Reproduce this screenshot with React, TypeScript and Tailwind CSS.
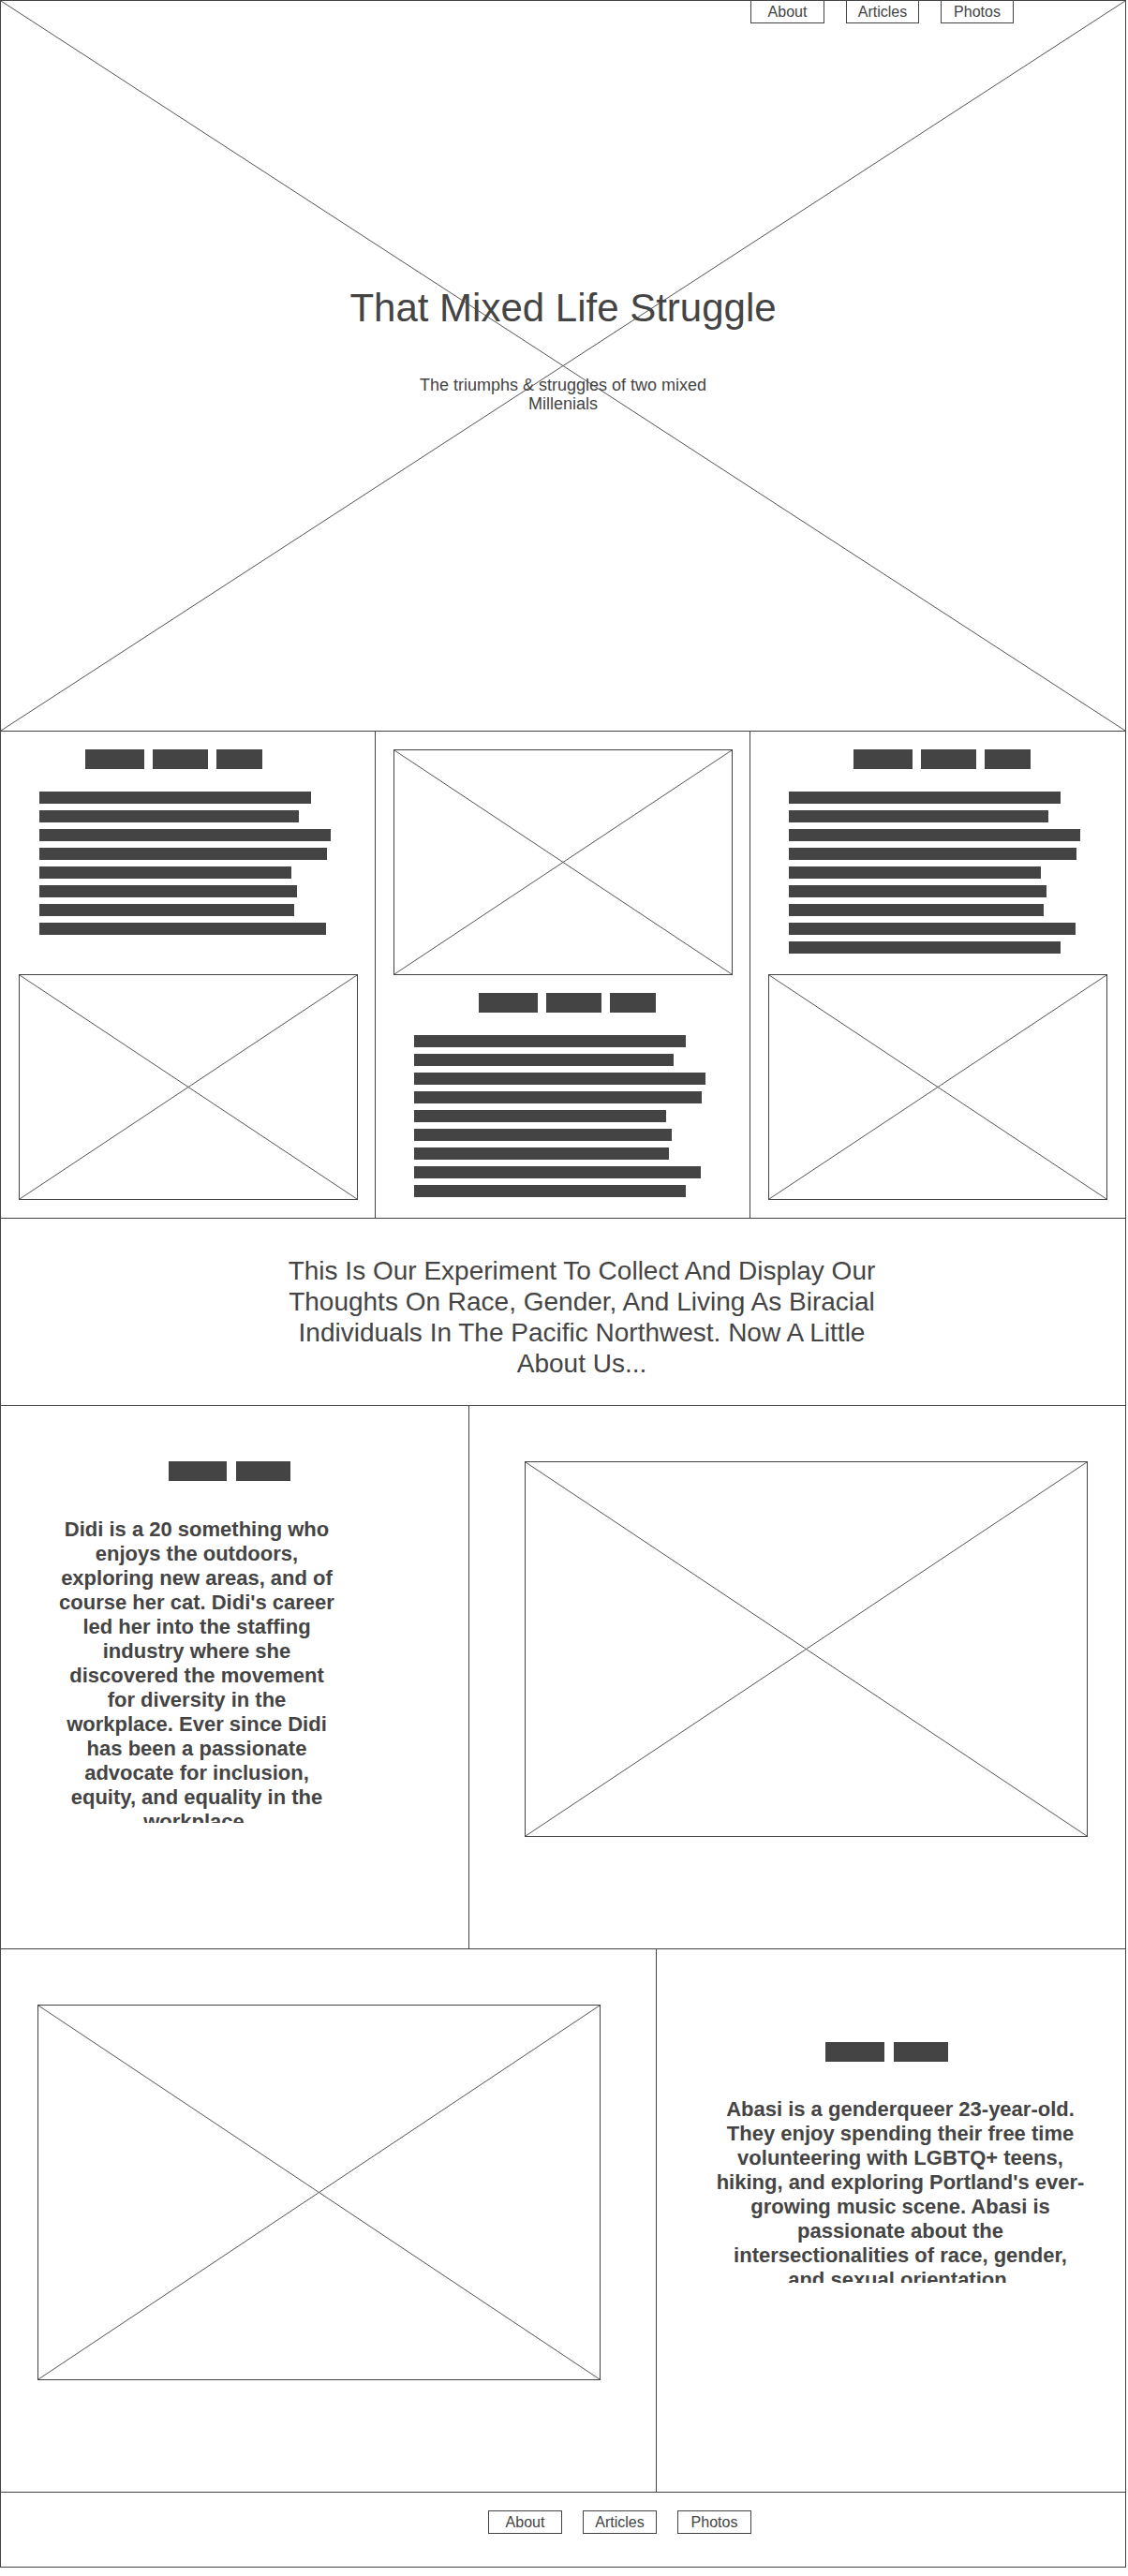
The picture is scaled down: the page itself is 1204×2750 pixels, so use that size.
import React from "react";

const barsShort = [290, 277, 311, 307, 269, 275, 272, 306];
const barsLong = [...barsShort, 290];

const didi =
  "Didi is a 20 something who enjoys the outdoors, exploring new areas, and of course her cat. Didi's career led her into the staffing industry where she discovered the movement for diversity in the workplace. Ever since Didi has been a passionate advocate for inclusion, equity, and equality in the workplace.";

const abasi =
  "Abasi is a genderqueer 23-year-old. They enjoy spending their free time volunteering with LGBTQ+ teens, hiking, and exploring Portland's ever-growing music scene. Abasi is passionate about the intersectionalities of race, gender, and sexual orientation.";

export default function App() {
  return (
    <div className="w-[1202px] border border-[#444] bg-white font-['Liberation_Sans',Arial,sans-serif] text-[#444]">
      {/* hero */}
      <header className="relative flex h-[780px] flex-col items-center border-b border-[#444]">
        <svg className="absolute inset-0 h-full w-full" preserveAspectRatio="none">
          <line x1="0" y1="0" x2="100%" y2="100%" stroke="#555" strokeWidth="1" />
          <line x1="100%" y1="0" x2="0" y2="100%" stroke="#555" strokeWidth="1" />
        </svg>
        <nav className="relative flex w-full gap-[23px] pl-[800px]">
          <NavButton label="About" width="w-[79px]" hero />
          <NavButton label="Articles" width="w-[78px]" hero />
          <NavButton label="Photos" width="w-[78px]" hero />
        </nav>
        <h1 className="relative mt-[280px] text-[42px] leading-[48px]">That Mixed Life Struggle</h1>
        <p className="relative mt-[48px] w-[330px] text-center text-[18px] leading-[20px]">
          The triumphs &amp; struggles of two mixed Millenials
        </p>
      </header>

      {/* article teasers */}
      <section className="flex h-[520px] border-b border-[#444]">
        <div className="flex w-[400px] flex-col border-r border-[#444] pt-[19px]">
          <Tags widths={[63, 59, 49]} className="ml-[90px] gap-[9px]" />
          <Bars widths={barsShort} className="ml-[41px] mt-[24px]" />
          <Cross className="ml-[19px] mt-[42px] h-[241px] w-[362px]" />
        </div>
        <div className="flex w-[400px] flex-col border-r border-[#444] pt-[19px]">
          <Cross className="ml-[19px] h-[241px] w-[362px]" />
          <Tags widths={[63, 59, 49]} className="ml-[110px] mt-[19px] gap-[9px]" />
          <Bars widths={barsLong} className="ml-[41px] mt-[24px]" />
        </div>
        <div className="flex flex-1 flex-col pt-[19px]">
          <Tags widths={[63, 59, 49]} className="ml-[110px] gap-[9px]" />
          <Bars widths={barsLong} className="ml-[41px] mt-[24px]" />
          <Cross className="ml-[19px] mt-[22px] h-[241px] w-[362px]" />
        </div>
      </section>

      {/* intro */}
      <section className="h-[200px] border-b border-[#444] pt-[39px]">
        <p className="ml-[300px] w-[640px] text-center text-[28px] leading-[33px]">
          This Is Our Experiment To Collect And Display Our Thoughts On Race, Gender, And Living As
          Biracial Individuals In The Pacific Northwest. Now A Little About Us...
        </p>
      </section>

      {/* didi */}
      <section className="flex h-[580px] border-b border-[#444]">
        <div className="flex w-[500px] flex-col border-r border-[#444] pt-[59px]">
          <Tags widths={[62, 58]} className="ml-[179px] gap-[10px]" />
          <Bio text={didi} className="ml-[59px] mt-[39px] h-[326px] w-[300px]" />
        </div>
        <div className="flex-1 pl-[59px] pt-[59px]">
          <Cross className="h-[401px] w-[601px]" />
        </div>
      </section>

      {/* abasi */}
      <section className="flex h-[580px] border-b border-[#444]">
        <div className="w-[700px] border-r border-[#444] pl-[39px] pt-[59px]">
          <Cross className="h-[401px] w-[601px]" />
        </div>
        <div className="flex flex-1 flex-col pt-[99px]">
          <Tags widths={[63, 58]} className="ml-[180px] gap-[10px]" />
          <Bio text={abasi} className="ml-[61px] mt-[38px] h-[198px] w-[398px]" />
        </div>
      </section>

      {/* footer */}
      <footer className="h-[79px] pt-[19px]">
        <nav className="flex gap-[22px] pl-[520px]">
          <NavButton label="About" width="w-[79px]" />
          <NavButton label="Articles" width="w-[79px]" />
          <NavButton label="Photos" width="w-[79px]" />
        </nav>
      </footer>
    </div>
  );
}

function NavButton({ label, width, hero }: { label: string; width: string; hero?: boolean }) {
  return (
    <a
      className={`flex items-center justify-center border-[#444] bg-white text-[16px] leading-none ${width} ${
        hero ? "h-[24px] border-x border-b" : "h-[25px] border"
      }`}
    >
      {label}
    </a>
  );
}

function Tags({ widths, className }: { widths: number[]; className: string }) {
  return (
    <div className={`relative flex ${className}`}>
      {widths.map((w, i) => (
        <div key={i} className="h-[21px] bg-[#444]" style={{ width: w }} />
      ))}
    </div>
  );
}

function Bars({ widths, className }: { widths: number[]; className: string }) {
  return (
    <div className={`flex flex-col gap-[7px] ${className}`}>
      {widths.map((w, i) => (
        <div key={i} className="h-[13px] bg-[#444]" style={{ width: w }} />
      ))}
    </div>
  );
}

function Bio({ text, className }: { text: string; className: string }) {
  return (
    <p className={`overflow-hidden text-center text-[22px] font-bold leading-[26px] ${className}`}>{text}</p>
  );
}

function Cross({ className }: { className: string }) {
  return (
    <div className={`relative shrink-0 border border-[#444] ${className}`}>
      <svg className="absolute inset-0 h-full w-full" preserveAspectRatio="none">
        <line x1="0" y1="0" x2="100%" y2="100%" stroke="#555" strokeWidth="1" />
        <line x1="100%" y1="0" x2="0" y2="100%" stroke="#555" strokeWidth="1" />
      </svg>
    </div>
  );
}
